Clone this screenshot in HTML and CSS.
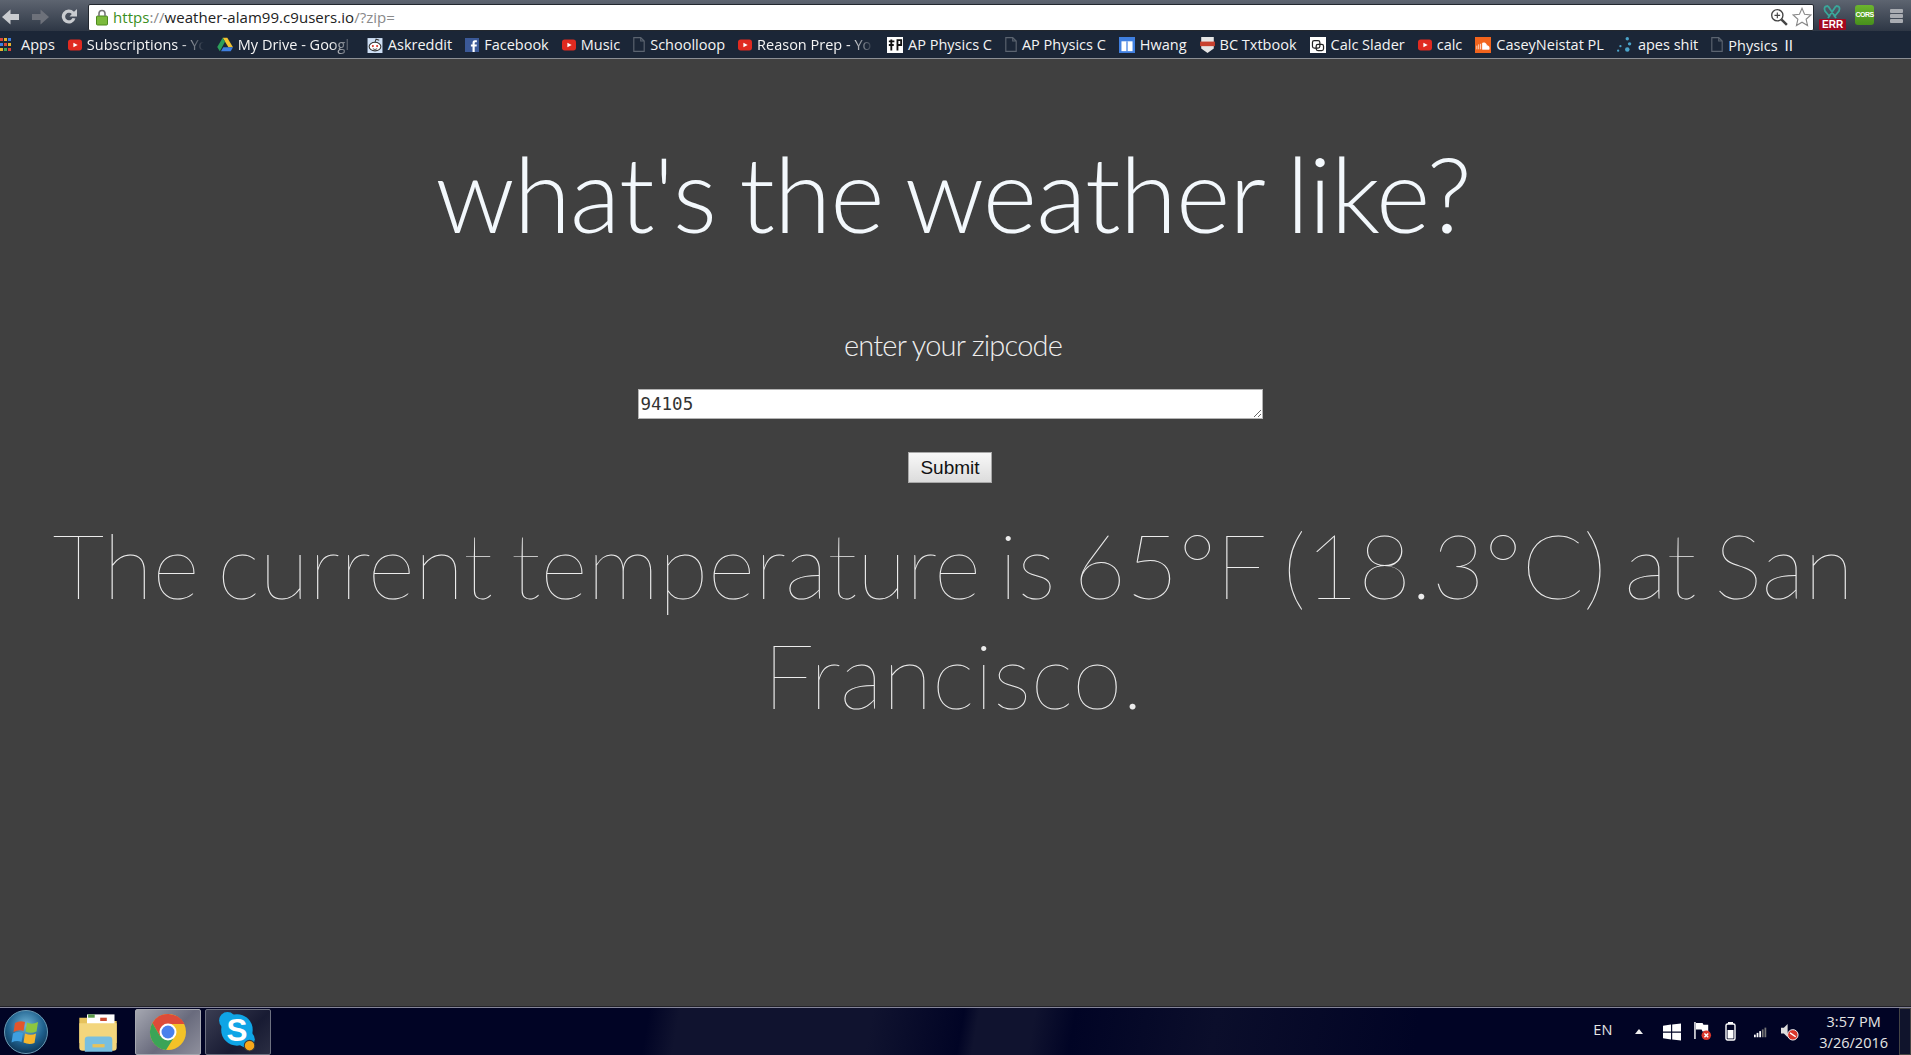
FILE: index.html
```html
<!DOCTYPE html>
<html lang="en">
<head>
<meta charset="utf-8">
<title>what's the weather like?</title>
<link rel="stylesheet" href="styles.css">
</head>
<body>
<header class="toolbar">
  <div class="nav">
    <svg width="20" height="20" viewBox="0 0 20 20"><path d="M1 10 9.500 2.500V7H18V13H9.500V17.500Z" fill="#c9ccd0"/></svg>
    <svg width="20" height="20" viewBox="0 0 20 20"><path d="M19 10 10.500 2.500V7H2V13H10.500V17.500Z" fill="#6d717a"/></svg>
    <svg width="20" height="20" viewBox="0 0 20 20"><path d="M16.500 11.500A7 7 0 1 1 15 4.800L18 2V9.500H10.500L12.800 7A3.800 3.800 0 1 0 13.500 11Z" fill="#c9ccd0"/></svg>
  </div>
  <div class="omnibox">
    <svg width="14" height="17" viewBox="0 0 14 17"><rect x="1.500" y="7" width="11" height="9" rx="1" fill="#7cba3c" stroke="#4d8a1d"/><path d="M4 7V4.500a3 3 0 0 1 6 0V7" fill="none" stroke="#777" stroke-width="1.600"/></svg>
    <div class="url"><span class="scheme">https</span><span class="dim">://</span>weather-alam99.c9users.io<span class="dim">/?zip=</span></div>
    <div class="omni-tools">
      <svg width="18" height="18" viewBox="0 0 16 16"><circle cx="6.500" cy="6.500" r="5" fill="none" stroke="#444" stroke-width="1.200"/><path d="M10.300 10.300 15 15" stroke="#444" stroke-width="2.200"/><path d="M4 6.500H9M6.500 4V9" stroke="#444"/></svg>
      <svg width="20" height="20" viewBox="0 0 18 18"><path d="M9 1.200 11.300 6.600 17 7.100 12.700 11 14 16.700 9 13.700 4 16.700 5.300 11 1 7.100 6.700 6.600Z" fill="#fff" stroke="#8a8a8a"/></svg>
    </div>
  </div>
  <div class="extensions">
    <div class="ext-err">
      <svg width="20" height="20" viewBox="0 0 20 20"><path d="M6 2 14 14M14 2 6 14M6 2Q1 2 3 7L8 13M14 2Q19 2 17 7L12 13" fill="none" stroke="#3aa79a" stroke-width="1.800"/></svg>
      <span class="err-badge">ERR</span>
    </div>
    <div class="ext-cors">CORS</div>
    <div class="menu"><span></span><span></span><span></span></div>
  </div>
</header>

<nav class="bookmarks">
  <a class="bm bm-apps"><svg width="11" height="13" viewBox="0 0 11 13"><rect width="3" height="3" fill="#d9453a"/><rect x="4" width="3" height="3" fill="#e8b52e"/><rect x="8" width="3" height="3" fill="#3f7fe0"/><rect y="5" width="3" height="3" fill="#3f7fe0"/><rect x="4" y="5" width="3" height="3" fill="#d9453a"/><rect x="8" y="5" width="3" height="3" fill="#e8b52e"/><rect y="10" width="3" height="3" fill="#e8b52e"/><rect x="4" y="10" width="3" height="3" fill="#3ea455"/><rect x="8" y="10" width="3" height="3" fill="#d9453a"/></svg><span>Apps</span></a>
  <a class="bm bm-fade"><svg width="14" height="14" viewBox="0 0 13 13"><use href="#yt"/></svg><span class="bm-label">Subscriptions - Yo</span></a>
  <a class="bm bm-fade bm-drive"><svg width="16" height="15" viewBox="0 0 14 13"><path d="M5 .500H9L14 9H10Z" fill="#f4c430"/><path d="M5 .500 7 4 2.500 12.500.2 8.600Z" fill="#2c9f5a"/><path d="M3.500 12.500 5.500 9H14L12 12.500Z" fill="#3f7fe0"/></svg><span class="bm-label">My Drive - Googl</span></a>
  <a class="bm"><svg width="16" height="16" viewBox="0 0 14 15"><rect y="1" width="14" height="14" fill="#cfe0f5"/><ellipse cx="7" cy="9" rx="5.500" ry="4" fill="#fff" stroke="#333"/><circle cx="5" cy="8.500" r="1" fill="#d9362a"/><circle cx="9" cy="8.500" r="1" fill="#d9362a"/><path d="M7 5 8 2 11 3" fill="none" stroke="#333"/><path d="M5 11Q7 12.500 9 11" fill="none" stroke="#333" stroke-width=".8"/></svg><span>Askreddit</span></a>
  <a class="bm"><svg width="14" height="14" viewBox="0 0 13 13"><rect width="13" height="13" fill="#3b5998"/><path d="M9 13V8H10.800L11 6H9V5C9 4.200 9.300 4 10 4H11V2.200H9.300C7.500 2.200 7 3.300 7 4.800V6H5.500V8H7V13Z" fill="#fff"/></svg><span>Facebook</span></a>
  <a class="bm"><svg width="14" height="14" viewBox="0 0 13 13"><use href="#yt"/></svg><span>Music</span></a>
  <a class="bm"><svg width="12" height="15" viewBox="0 0 10 13"><use href="#page"/></svg><span>Schoolloop</span></a>
  <a class="bm bm-fade"><svg width="14" height="14" viewBox="0 0 13 13"><use href="#yt"/></svg><span class="bm-label">Reason Prep - Yo</span></a>
  <a class="bm"><svg width="16" height="16" viewBox="0 0 13 13"><rect width="13" height="13" fill="#fff"/><path d="M1.500 3.500H6M3.500 2V11M8.500 11V2.500H11.500V6.500H8.500M5.500 6.500H1.500" fill="none" stroke="#111" stroke-width="1.500"/></svg><span>AP Physics C</span></a>
  <a class="bm"><svg width="12" height="15" viewBox="0 0 10 13"><use href="#page"/></svg><span>AP Physics C</span></a>
  <a class="bm"><svg width="16" height="16" viewBox="0 0 13 13"><rect width="13" height="13" fill="#3f7fe0"/><rect x="2" y="3.500" width="9" height="8" fill="#fff"/><rect x="6" y="3.500" width="1" height="8" fill="#3f7fe0"/></svg><span>Hwang</span></a>
  <a class="bm"><svg width="15" height="16" viewBox="0 0 13 14"><path d="M1 0H12V10L6.500 14 1 10Z" fill="#e6e6e6"/><rect y="4" width="13" height="4" fill="#c8412f"/></svg><span>BC Txtbook</span></a>
  <a class="bm"><svg width="16" height="16" viewBox="0 0 13 13"><rect width="13" height="13" fill="#fff"/><rect x="2" y="3" width="6" height="6" rx="1.500" fill="none" stroke="#222"/><rect x="5" y="6" width="6" height="5" rx="1.500" fill="none" stroke="#222"/></svg><span>Calc Slader</span></a>
  <a class="bm"><svg width="14" height="14" viewBox="0 0 13 13"><use href="#yt"/></svg><span>calc</span></a>
  <a class="bm"><svg width="16" height="16" viewBox="0 0 13 13"><rect width="13" height="13" fill="#f2641d"/><path d="M1.500 10V7M3 10V6M4.500 10V5.500M6 10V5Q9 4 9.500 7Q12 7 11.500 10Z" fill="#fff" stroke="#fff" stroke-width=".6"/></svg><span>CaseyNeistat PL</span></a>
  <a class="bm"><svg width="16" height="16" viewBox="0 0 14 14"><g fill="#4aa3c9"><circle cx="9" cy="1.500" r="1.500"/><circle cx="11" cy="6" r="1.500"/><circle cx="9" cy="11" r="2"/><circle cx="3" cy="8" r="1"/><circle cx="1" cy="12" r="1"/></g></svg><span>apes shit</span></a>
  <a class="bm"><svg width="12" height="15" viewBox="0 0 10 13"><use href="#page"/></svg><span>Physics <span class="roman">Ⅱ</span></span></a>
</nav>

<main class="page">
  <h1 class="title">what's the weather like?</h1>
  <form class="zip-form">
    <label class="zip-label" for="zip">enter your zipcode</label>
    <textarea class="zip-input" id="zip" rows="1">94105</textarea>
    <button class="submit" type="button">Submit</button>
  </form>
  <p class="result">The current temperature is 65°F (18.3°C) at San Francisco.</p>
</main>

<footer class="taskbar">
  <div class="task-left">
    <svg class="start" width="46" height="46" viewBox="0 0 46 46">
      <defs><radialGradient id="orb" cx=".5" cy=".35" r=".7"><stop offset="0" stop-color="#6fb6d8"/><stop offset=".6" stop-color="#1e5f8c"/><stop offset="1" stop-color="#0b2c48"/></radialGradient></defs>
      <circle cx="23" cy="23" r="21.500" fill="url(#orb)" stroke="#6a9bb5"/>
      <path d="M12 14Q17 11 22 13L20.500 22Q16 20 10.500 23Z" fill="#e2552b"/>
      <path d="M24 13.500Q29 16 35 13L33.500 22.500Q28 25 22.500 22.500Z" fill="#8dc63f"/>
      <path d="M10 24.500Q15 22 20 24L18.500 33Q14 31 8.500 33.500Z" fill="#3f9fe0"/>
      <path d="M22 24.500Q28 27 33 24.500L31.500 34Q26 36 20.500 33.500Z" fill="#f6b62d"/>
    </svg>
    <div class="task-btn">
      <svg width="44" height="44" viewBox="0 0 40 40"><path d="M3 7H13L15 10H37V30H3Z" fill="#e6c25c"/><rect x="10" y="4" width="25" height="12" fill="#fff"/><rect x="11" y="4" width="6" height="3" fill="#5a9a4a"/><rect x="22" y="7" width="6" height="3" fill="#c84a30"/><path d="M3 12H37V34Q37 37 34 37H6Q3 37 3 34Z" fill="#f3d67d"/><path d="M11 24H30Q33 24 33 27V38H8V27Q8 24 11 24Z" fill="#78bfe0"/><rect x="15" y="31" width="11" height="3" fill="#e6c25c"/></svg>
    </div>
    <div class="task-btn task-open task-active">
      <svg width="38" height="38" viewBox="0 0 38 38"><circle cx="19" cy="19" r="18" fill="#f3c228"/><path d="M19 1A18 18 0 0 0 3.400 10L11 23 19 11H35.500A18 18 0 0 0 19 1Z" fill="#dd4b39"/><path d="M3.400 10A18 18 0 0 0 17 37L24 26 11 23Z" fill="#3ba457"/><circle cx="19" cy="19" r="8.500" fill="#fff"/><circle cx="19" cy="19" r="6.500" fill="#4a80ec"/></svg>
    </div>
    <div class="task-btn task-open">
      <svg width="42" height="42" viewBox="0 0 40 40"><circle cx="19" cy="18" r="15" fill="#0fa5e6"/><circle cx="10" cy="9" r="8" fill="#0fa5e6"/><circle cx="28" cy="27" r="8" fill="#0fa5e6"/><text x="19" y="29" class="skype-s">S</text><circle cx="31" cy="33" r="5" fill="#f7a81b" stroke="#3a3a3a"/></svg>
    </div>
  </div>
  <div class="tray">
    <span class="lang">EN</span>
    <svg class="caret" width="8" height="5" viewBox="0 0 12 6" preserveAspectRatio="none"><path d="M6 0 12 6H0Z" fill="#eee"/></svg>
    <svg width="18" height="18" viewBox="0 0 19 18"><path d="M0 2.500 8.500 1.200V8.500H0ZM9.700 1 19 0V8.500H9.700ZM0 9.700H8.500V16.800L0 15.500ZM9.700 9.700H19V18L9.700 16.800Z" fill="#fff"/></svg>
    <svg width="18" height="19" viewBox="0 0 19 20"><path d="M1 0V18" stroke="#fff" stroke-width="1.500"/><path d="M2 1H9L10 3H15V10H9L8 8H2Z" fill="#fff"/><circle cx="13" cy="14" r="5" fill="#d9362a"/><path d="M11 12 15 16M15 12 11 16" stroke="#fff" stroke-width="1.500"/></svg>
    <svg class="battery" width="11" height="19" viewBox="0 0 11 19"><rect x="3" y="0" width="5" height="2" fill="#fff"/><rect x="1" y="2" width="9" height="16" rx="1.500" fill="none" stroke="#fff" stroke-width="1.400"/><rect x="2.500" y="8" width="6" height="8.500" fill="#fff"/></svg>
    <svg width="14" height="12" viewBox="0 0 16 12"><g fill="#fff"><rect y="9" width="2" height="3"/><rect x="3" y="7" width="2" height="5"/><rect x="6" y="5" width="2" height="7"/></g><g fill="#777"><rect x="9" y="3" width="2" height="9"/><rect x="12" y="1" width="2" height="11"/></g></svg>
    <svg width="18" height="18" viewBox="0 0 19 19"><path d="M0 5H3L7 1V15L3 11H0Z" fill="#ddd"/><circle cx="12.500" cy="12.500" r="5.500" fill="#d9362a" stroke="#fff"/><path d="M9.500 10.500 15.500 14.500" stroke="#fff" stroke-width="1.500"/></svg>
    <div class="clock"><span>3:57 PM</span><span>3/26/2016</span></div>
    <div class="show-desktop"></div>
  </div>
</footer>

<svg class="defs" width="0" height="0">
  <defs>
    <g id="yt"><rect y="1.500" width="13" height="10" rx="2.500" fill="#e02a20"/><path d="M5 4.500 9 6.500 5 8.500Z" fill="#fff"/></g>
    <g id="page"><path d="M.5.500H6.500L9.500 3.500V12.500H.5Z M6.500.500V3.500H9.500" fill="none" stroke="#5b6470"/></g>
  </defs>
</svg>
</body>
</html>
```
FILE: styles.css
```css
* { box-sizing: border-box; }
html, body { height: 100%; }
body {
  margin: 0;
  height: 100vh;
  overflow: hidden;
  display: flex;
  flex-direction: column;
  background: #404040;
  font-family: "Open Sans", "Liberation Sans", sans-serif;
}
.defs { position: absolute; }

/* browser chrome */
.toolbar {
  height: 31px;
  flex: none;
  display: flex;
  align-items: center;
  padding: 3px 0 0;
  background: linear-gradient(#5d6470, #2e3745);
}
.nav { width: 88px; display: flex; align-items: center; gap: 9px; padding-left: 1px; flex: none; }
.omnibox {
  width: 1726px;
  height: 27px;
  flex: none;
  display: flex;
  align-items: center;
  gap: 4px;
  padding: 0 6px;
  background: #fff;
  border: 1px solid #22272e;
  border-radius: 2px;
}
.url { flex: 1; font-size: 15px; letter-spacing: .05px; color: #222; white-space: nowrap; }
.scheme { color: #3b8f22; }
.dim { color: #8a8a8a; }
.omni-tools { display: flex; align-items: center; gap: 4px; margin-right: -6px; padding-right: 1px; }
.extensions { flex: 1; display: flex; align-items: center; padding-left: 5px; }
.ext-err { position: relative; width: 26px; height: 26px; display: flex; justify-content: center; }
.err-badge {
  position: absolute; left: 0; bottom: 0;
  background: #a3081f; color: #fff;
  font: bold 10px/11px "Liberation Sans", sans-serif;
  padding: 0 3px; border-radius: 1px;
}
.ext-cors {
  width: 19px; height: 20px;
  margin: 0 16px 5px 10px;
  background: linear-gradient(#6cb52e, #47901c);
  border-radius: 3px;
  color: #fff;
  font: bold 7px/20px "Liberation Sans", sans-serif;
  letter-spacing: -.5px;
  text-align: center;
}
.menu { display: flex; flex-direction: column; gap: 1px; margin-bottom: 2px; }
.menu span { width: 13px; height: 4px; background: #a9acb2; border-radius: 1px; }

.bookmarks {
  height: 28px;
  flex: none;
  display: flex;
  align-items: center;
  gap: 13px;
  background: #1b2637;
  border-bottom: 1px solid #8d9095;
  color: #f4f4f4;
  font-size: 14.500px;
  letter-spacing: 0;
  white-space: nowrap;
}
.bm { display: flex; align-items: center; gap: 5px; flex: none; }
.bm-apps { gap: 10px; }
.bm-fade { width: 136px; }
.bm-drive { width: 137px; }
.bm-label {
  flex: 1;
  min-width: 0;
  -webkit-mask-image: linear-gradient(90deg, #000 80%, transparent);
  mask-image: linear-gradient(90deg, #000 80%, transparent);
}
.roman { font-family: "Noto Sans CJK JP", "Open Sans", sans-serif; }

/* page */
.page {
  flex: 1;
  min-height: 0;
  display: flex;
  flex-direction: column;
  align-items: center;
  padding: 0 45px 0 40px;
  color: #fff;
  font-family: Lato, "Liberation Sans", sans-serif;
}
.title {
  margin: 74px 0 0;
  font-size: 104px;
  line-height: 120px;
  font-weight: 300;
  letter-spacing: -.9px;
  word-spacing: -4px;
  color: #f3f8fc;
}
.zip-form { display: flex; flex-direction: column; align-items: center; }
.zip-label {
  margin-top: 74px;
  font-size: 29px;
  font-weight: 300;
  line-height: 36px;
  letter-spacing: -.8px;
  color: #eee;
}
.zip-input {
  display: block;
  width: 625px;
  height: 30px;
  margin: 26px 0 0 -6px;
  padding: 2px 2px;
  border: 1px solid #b3b3b3;
  background: #fff;
  color: #333;
  font: 17.500px/24px "DejaVu Sans Mono", monospace;
  overflow: hidden;
}
.submit {
  width: 84px;
  height: 31px;
  margin: 33px 0 0 -6px;
  padding: 0;
  border: 1px solid #a8a8a8;
  background: linear-gradient(#f8f8f8, #dcdcdc);
  color: #111;
  font: 19px "Liberation Sans", sans-serif;
}
.result {
  margin: 26px 0 0;
  font-size: 91px;
  line-height: 110px;
  font-weight: 100;
  letter-spacing: -.2px;
  word-spacing: -7.800px;
  text-align: center;
  color: #ececec;
}

/* taskbar */
.taskbar {
  height: 48px;
  flex: none;
  display: flex;
  align-items: center;
  justify-content: space-between;
  background:
    linear-gradient(100deg,
      #010425 0 640px, #10132f 670px 860px, #010425 950px,
      #10132f 965px 1020px, #010425 1060px,
      #0b0e2b 1200px, #010425 1400px);
  border-top: 1px solid #84849a;
  box-shadow: 0 -1px #222228;
}
.task-left { display: flex; align-items: center; height: 100%; }
.start { margin: 0 16px 0 3px; }
.task-btn { width: 66px; height: 46px; display: flex; align-items: center; justify-content: center; margin-right: 4px; }
.task-open { border: 1px solid #6d7180; border-radius: 2px; background: linear-gradient(135deg, #3a3d52, #181b33 60%, #2a2d42); }
.task-active { background: linear-gradient(135deg, #a4a6b0, #696b7d 55%, #8e8f9c); border-color: #a6a8b0; }
.skype-s { font: bold 30px "Liberation Sans", sans-serif; fill: #fff; text-anchor: middle; }
.tray { display: flex; align-items: center; gap: 13px; height: 100%; color: #e6e6e6; }
.lang { font: 14.500px "Open Sans", sans-serif; margin-right: 10px; margin-bottom: 4px; }
.caret { margin-right: 7px; }
.battery { margin-right: 5px; }
.clock {
  display: flex; flex-direction: column; align-items: center;
  font: 14.500px/21px "Open Sans", sans-serif;
  margin-left: 7px;
}
.show-desktop { width: 12px; height: 100%; border: 1px solid #444; background: #10142c; margin-left: -2px; }
```
